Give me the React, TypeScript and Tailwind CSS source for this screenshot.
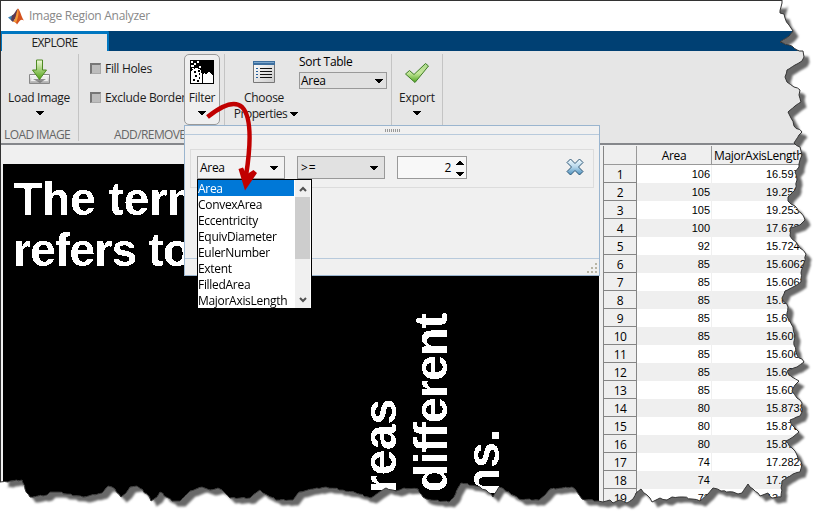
import React from "react";

const ui = "font-['Open_Sans','Noto_Sans',sans-serif]";

const rows: [number, string][] = [
  [106, "16.5972"], [105, "19.2536"], [105, "19.2536"], [100, "17.6732"], [92, "15.7244"],
  [85, "15.6062"], [85, "15.6062"], [85, "15.6062"], [85, "15.6062"], [85, "15.6062"],
  [85, "15.6062"], [85, "15.6062"], [85, "15.6062"], [80, "15.8738"], [80, "15.8738"],
  [80, "15.8738"], [74, "17.2823"], [74, "17.2823"], [73, "13.2823"],
];

const properties = ["Area", "ConvexArea", "Eccentricity", "EquivDiameter", "EulerNumber", "Extent", "FilledArea", "MajorAxisLength"];

const edge: number[][] = [
  [782,0],[781,7],[780,13],[784,14],[785,18],[789,25],[793,31],[789,36],[780,42],[789,45],[797,50],[803,51],[804,57],[802,61],[795,65],[787,70],[785,77],[787,82],[794,87],[800,90],[799,95],[801,102],[795,106],[788,112],[791,118],[794,126],[802,132],[799,135],[794,143],[800,147],[802,155],[800,160],[799,167],[795,172],[797,180],[795,190],[788,197],[788,201],[795,206],[801,213],[805,220],[800,225],[790,228],[790,236],[796,242],[800,248],[806,254],[804,263],[801,273],[801,282],[795,286],[785,291],[782,298],[788,307],[787,317],[793,327],[795,335],[794,345],[797,355],[804,362],[797,367],[787,371],[792,377],[799,381],[795,385],[792,391],[797,398],[802,403],[802,412],[800,416],[790,420],[793,426],[799,432],[793,437],[786,441],[792,448],[797,455],[802,465],[800,472],[793,474],[782,481],[781,497],
  [772,498],[768,493],[760,496],[753,489],[748,484],[742,493],[738,494],[733,492],[721,491],[713,488],[708,494],[700,501],[692,499],[683,497],[672,497],[667,500],[660,498],[652,502],[647,495],[641,489],[636,493],[633,499],[627,503],[620,500],[613,503],[610,500],[603,502],[598,501],[582,499],[577,492],[572,487],[562,488],[550,489],[545,495],[539,500],[519,499],[509,492],[499,487],[493,497],[486,490],[476,486],[461,483],[458,488],[454,497],[449,502],[431,500],[423,497],[418,489],[404,488],[396,491],[386,488],[378,493],[371,498],[356,493],[343,490],[326,487],[313,489],[299,492],[293,500],[276,500],[267,495],[260,490],[253,495],[250,498],[230,498],[225,493],[218,488],[210,490],[202,487],[190,491],[180,501],[172,501],[160,492],[157,497],[151,501],[147,494],[137,486],[130,487],[126,493],[121,497],[115,489],[108,486],[102,493],[83,497],[67,494],[58,492],[50,492],[47,495],[30,497],[25,489],[22,480],[10,481],[8,482],[0,482],
];
const rough = edge.flatMap((p, i) => {
  const n = edge[i + 1];
  if (!n) return [p];
  const len = Math.hypot(n[0] - p[0], n[1] - p[1]);
  const k = Math.max(1, Math.floor(len / 3));
  return Array.from({ length: k }, (_, j) => {
    const w = j === 0 ? 0 : ((i * 7 + j * 5) % 3) - 1;
    return [p[0] + ((n[0] - p[0]) * j) / k + w * 0.5, p[1] + ((n[1] - p[1]) * j) / k - w * 0.5];
  });
});
const torn = "M" + rough.map((p) => p.map((v) => v.toFixed(1)).join(",")).join("L");
const sheet = torn + "L-20,482L-20,-20L782,-20Z";

const Caret = ({ className = "" }: { className?: string }) => (
  <svg width="8" height="5" viewBox="0 0 8 5" className={"shrink-0 " + className} shapeRendering="crispEdges"><path d="M0 0h8v1H7v1H6v1H5v1H3V3H2V2H1V1H0z" fill="#000" /></svg>
);

const Check = ({ label }: { label: string }) => (
  <div className="flex h-[17px] items-center gap-1 whitespace-nowrap">
    <span className="size-[11px] shrink-0 border-2 border-r border-b border-[#777] border-r-[#aaa] border-b-[#aaa] bg-[#bdbdbd]" />
    <span>{label}</span>
  </div>
);

function Matlab() {
  return (
    <svg width="17" height="17" viewBox="0 0 17 17" className="shrink-0">
      <path d="M0 9.500 5 7l3 2-3.500 4.500z" fill="#3d83b5" />
      <path d="M4 7.500C7 6 7.500 2 10 .5L8 9l-3 5-2-2z" fill="#5b3a52" />
      <path d="M10 .5c2 1 3.500 9 6 12-3-2-4-.5-7 4-1-2-2-2.500-4-2.500C8 12 8 3 10 .5z" fill="#d4511d" />
      <path d="M10 1c1 3 .5 8-2 14-1-2-2-1-3-1C8.500 10 8.500 4 10 1z" fill="#f19b3c" />
    </svg>
  );
}

function LoadIcon() {
  return (
    <svg width="24" height="26" viewBox="0 0 24 26">
      <defs><linearGradient id="lg" x2="0" y2="1"><stop stopColor="#f4fbdc" /><stop offset="1" stopColor="#4fa313" /></linearGradient>
        <linearGradient id="tray" x2="0" y2="1"><stop stopColor="#fff" /><stop offset="1" stopColor="#aaa" /></linearGradient></defs>
      <path d="M1.500 15.500h20v9h-20z" fill="url(#tray)" stroke="#888" />
      <path d="M4 17h15l1 5H3z" fill="#eee" /><path d="M5 20h13l-6 4z" fill="#666" opacity=".7" />
      <path d="M8.500 1h6v10h4L11.500 20.500 4.500 11h4z" fill="url(#lg)" stroke="#4e8a22" />
    </svg>
  );
}

function FilterIcon() {
  return (
    <svg width="24" height="24" viewBox="0 0 24 24" shapeRendering="crispEdges">
      <path d="M0 0h24v24H0z" fill="#000" />
      <path d="M1 23V12l2-3 3-1 3 1 2 2 1 4v8zM13 23v-8l1-2 2 1 2-2 3 1 2 3v7z" fill="#fff" />
      <path d="M1 1h2v2H1zM4 3h2v2H4zM7 1h2v2H7zM1 5h3v2H1zM9 6h2v2H9zM2 8h2v1H2z" fill="#fff" />
      <path d="M4 11h2v2H4zM8 10h2v2H8zM5 15h2v2H5zM9 17h1v2H9zM3 19h2v2H3zM7 20h2v2H7zM9 13h1v2H9z" fill="#000" />
    </svg>
  );
}

function ListIcon() {
  return (
    <svg width="23" height="23" viewBox="0 0 23 23">
      <defs><linearGradient id="ls" x2="1" y2="1"><stop stopColor="#fff" /><stop offset="1" stopColor="#ccc" /></linearGradient></defs>
      <path d="M.5.5h21v21H.5z" fill="url(#ls)" stroke="#777" />
      <path d="M0 0h22v4H0z" fill="#3d6f9f" /><path d="M1 1h20v1H1z" fill="#7ba6cc" />
      <path d="M7 7.500h12M7 10.500h12M7 13.500h12M7 16.500h12" stroke="#111" />
      <path d="M3 7.500h2M3 10.500h2M3 13.500h2M3 16.500h2" stroke="#245f9c" />
    </svg>
  );
}

function Tick() {
  return (
    <svg width="26" height="22" viewBox="0 0 26 22">
      <defs><linearGradient id="tk" x2="0" y2="1"><stop stopColor="#a9d68a" /><stop offset=".5" stopColor="#c6e79b" /><stop offset="1" stopColor="#4da51d" /></linearGradient></defs>
      <path d="m1.500 12 4-3.500 4.500 4L21.500 1.500l3 2.500L11 20.500z" fill="url(#tk)" stroke="#3f7d26" />
    </svg>
  );
}

function Toolstrip() {
  const foot = "flex h-[17px] items-center whitespace-nowrap text-[12px] tracking-[-0.6px] text-[#666]";
  return (
    <div className="flex h-[94px] border-b-2 border-[#85878b] bg-[#e6e6e6] text-[12px] leading-4 tracking-[-0.3px] text-[#1c1c1c]">
      <div className="flex w-[77px] flex-col">
        <div className="flex h-[76px] flex-col items-center pt-2"><LoadIcon /><span className="mt-[5px] -ml-px whitespace-nowrap">Load Image</span><Caret className="mt-[5px]" /></div>
        <div className={foot + " pl-[3px]"}>LOAD IMAGE</div>
      </div>
      <div className="mt-[3px] h-[87px] w-px bg-[#c4c4c4]" />
      <div className="flex w-[105px] flex-col pl-[11px]">
        <div className="flex h-[76px] flex-col gap-3 pt-[9px]"><Check label="Fill Holes" /><Check label="Exclude Border" /></div>
        <div className={foot + " pl-6"}>ADD/REMOVE</div>
      </div>
      <div className="relative mt-[3px] flex h-[71px] w-9 shrink-0 flex-col items-center rounded-[5px] border border-[#999] bg-[#efefef] pt-[5px]">
        <FilterIcon /><span className="mt-1.5">Filter</span><Caret className="mt-[5px]" />
      </div>
      <div className="mt-[3px] ml-1 h-[87px] w-px bg-[#c4c4c4]" />
      <div className="flex w-[74px] flex-col items-center pt-[10px] pl-1">
        <ListIcon /><span className="mt-[6px]">Choose</span>
        <div className="flex items-center gap-[3px] pl-1 tracking-[-0.45px]">Properties<Caret /></div>
      </div>
      <div className="w-[92px] pt-[3px]">
        <div className="whitespace-nowrap text-black">Sort Table</div>
        <div className="mt-[2px] flex h-[17px] w-[88px] items-center justify-between border border-[#999] bg-[#e1e1e1] pr-[3px] pl-px pt-px text-black">Area<Caret /></div>
      </div>
      <div className="mt-[3px] h-[87px] w-px bg-[#c4c4c4]" />
      <div className="flex w-[50px] flex-col items-center pt-[11px] tracking-[-0.1px]"><Tick /><span className="mt-[6px]">Export</span><Caret className="mt-[5px]" /></div>
      <div className="mt-[3px] h-[87px] w-px bg-[#c4c4c4]" />
    </div>
  );
}

function BinaryImage() {
  return (
    <svg width="596" height="363" viewBox="3 164 596 363" className="mt-[19px] ml-[2px] shrink-0 bg-black font-['Liberation_Sans',sans-serif] font-bold">
      <defs><filter id="bin" filterUnits="userSpaceOnUse" x="3" y="164" width="596" height="363"><feComponentTransfer><feFuncA type="discrete" tableValues="0 1" /></feComponentTransfer></filter></defs>
      <g fill="#fff" fontSize="46" filter="url(#bin)">
        <text x="14" y="215" textLength="194">The term</text>
        <text x="13" y="266" textLength="178">refers to</text>
        <text transform="translate(396 493) rotate(-90)" textLength="94">reas</text>
        <text transform="translate(447 492) rotate(-90)" textLength="179">different</text>
        <text transform="translate(499 496) rotate(-90)" textLength="67">ns.</text>
      </g>
      <path d="M312 275h10v1h-10z" fill="#fff" />
    </svg>
  );
}

function RegionTable() {
  return (
    <div className="mt-px ml-1 w-[225px] shrink-0 border-l border-[#858585] bg-white text-black">
      <div className="flex h-[19px] border-b border-[#999] bg-[#efefef] text-[12px] leading-[20px] tracking-[-0.3px]">
        <div className="w-[33px] border-r border-[#999]" />
        <div className="w-[75px] border-r border-[#999] text-center">Area</div>
        <div className="w-[100px] pl-[2px]">MajorAxisLength</div>
      </div>
      {rows.map(([area, length], i) => (
        <div key={i} className={"flex h-[18px] " + (i % 2 ? "bg-[#efefef]" : "bg-white")}>
          <div className="w-[33px] border-r border-b border-[#858585] bg-[#efefef] text-center text-[12px] leading-[19px] tracking-[-0.5px]">{i + 1}</div>
          <div className="w-[75px] border-r border-[#f0f0f0] pr-px text-right font-['Liberation_Sans',sans-serif] text-[11px] leading-[18px]">{area}</div>
          <div className="w-[93px] pl-[54px] font-['Liberation_Sans',sans-serif] text-[11px] leading-[18px]">{length}</div>
        </div>
      ))}
    </div>
  );
}

function FilterPanel() {
  return (
    <div className="absolute top-[125px] left-[184px] h-[151px] w-[416px] border border-[#9ab5cf] bg-[#f0f0f0] text-[12px] tracking-[-0.3px] text-black">
      <div className="flex h-[9px] items-center justify-center gap-px border-b border-[#b8cadc]">
        {Array.from({ length: 8 }, (_, i) => <span key={i} className="h-[3px] w-px bg-[#999]" />)}
      </div>
      <div className="mt-[14px] ml-[5px] flex h-[39px] w-[404px] items-start border border-[#dcdcdc] pt-[6px] pl-[6px]">
        <div className="flex h-[23px] w-[88px] items-center justify-between border border-[#999] bg-[#f2f2f2] pt-px pr-[6px] pl-[2px]">Area<Caret /></div>
        <div className="ml-3 flex h-[23px] w-[88px] items-center justify-between border border-[#999] bg-[#e1e1e1] pt-px pr-[6px] pl-[3px] tracking-[1px]">&gt;=<Caret /></div>
        <div className="ml-3 flex h-[23px] w-[70px] items-center justify-end border border-[#999] bg-[#f8f8f8] pt-px pr-[2px]">2
          <div className="ml-[5px] flex flex-col gap-[7px]"><Caret className="rotate-180" /><Caret /></div>
        </div>
        <svg className="mt-[2px] ml-[99px]" width="18" height="18" viewBox="0 0 18 18">
          <defs><linearGradient id="xx" x2="0" y2="1"><stop stopColor="#f4fbff" /><stop offset=".5" stopColor="#b5d6eb" /><stop offset="1" stopColor="#4a8fbd" /></linearGradient></defs>
          <path d="m4.500 1 4.500 4.500L13.500 1 17 4.500 12.500 9l4.500 4.500-3.500 3.500L9 12.500 4.500 17 1 13.500 5.500 9 1 4.500z" fill="url(#xx)" stroke="#2f5877" strokeLinejoin="round" />
        </svg>
      </div>
      <div className="mt-[70px] flex h-[17px] items-end justify-end border-t border-[#b8cadc]">
        <svg width="12" height="13" viewBox="0 0 12 13" fill="#b7b5a5" className="mb-px"><path d="M8 2h2v2H8zM4 6h2v2H4zM8 6h2v2H8zM0 10h2v2H0zM4 10h2v2H4zM8 10h2v2H8z" /></svg>
      </div>
    </div>
  );
}

function PropertyMenu() {
  return (
    <div className="absolute top-[179px] left-[197px] flex h-[129px] w-[115px] border border-b-0 border-black bg-white text-[12px] text-black">
      <div className="w-[96px]">
        {properties.map((p, i) => (
          <div key={p} className={"h-4 whitespace-nowrap pt-px leading-4 tracking-[-0.3px] " + (i === 0 ? "bg-[#0078d7] text-white" : "")}>{p}</div>
        ))}
      </div>
      <div className="ml-px flex w-[15px] flex-col items-center bg-[#f0f0f0] pt-[6px] pb-[5px]">
        <svg width="8" height="6" viewBox="0 0 8 6" className="shrink-0"><path d="m1 5 3-3 3 3" fill="none" stroke="#505050" strokeWidth="2" /></svg>
        <div className="mt-[5px] h-[62px] w-[15px] shrink-0 bg-[#cdcdcd]" />
        <svg width="8" height="6" viewBox="0 0 8 6" className="mt-auto shrink-0"><path d="m1 1 3 3 3-3" fill="none" stroke="#505050" strokeWidth="2" /></svg>
      </div>
    </div>
  );
}

export default function App() {
  return (
    <div className={"relative h-[527px] w-[828px] overflow-hidden bg-white " + ui}>
      <div className="h-[527px] w-[828px] border-t border-l border-[#333] bg-[#f0f0f0]">
        <header className="flex h-[30px] items-center gap-1 bg-white pl-[7px] text-[12px] tracking-[-0.28px] text-[#888]"><Matlab />Image Region Analyzer</header>
        <nav className="flex h-5 bg-[#004073]">
          <div className="flex w-[108px] items-center justify-center rounded-tr-[2px] border-t-[3px] border-r-2 border-l border-[#0076c0] bg-[#e6e6e6] text-[12px] tracking-[-0.65px] text-[#222]">EXPLORE</div>
        </nav>
        <Toolstrip />
        <main className="flex h-[382px] overflow-hidden"><BinaryImage /><RegionTable /></main>
      </div>
      <FilterPanel />
      <PropertyMenu />
      <svg className="absolute inset-0" width="828" height="527" viewBox="0 0 828 527">
        <defs>
          <clipPath id="outside"><path d={"M-30,-30H860V560H-30Z" + sheet} clipRule="evenodd" /></clipPath>
          <filter id="soft" x="-5%" y="-5%" width="110%" height="110%" colorInterpolationFilters="sRGB"><feGaussianBlur stdDeviation="1.3" /></filter>
        </defs>
        <g clipPath="url(#outside)">
          <path d="M0 0h828v527H0z" fill="#fff" />
          <path d={"M3,3H781" + torn.replace("M", "L") + "L3,482Z"} fill="#686868" filter="url(#soft)" transform="translate(5.500 5.500)" />
        </g>
        <path d={torn} fill="none" stroke="#333" />
        <path d="M207.500 117C220 107 234 100 242 107C252 117 251 144 246 176" fill="none" stroke="#c00000" strokeWidth="4.500" />
        <path d="m238.500 169 4.500-1.500 3.500 7 7-4.500 3.500 3-12 17.500z" fill="#c00000" />
      </svg>
    </div>
  );
}
